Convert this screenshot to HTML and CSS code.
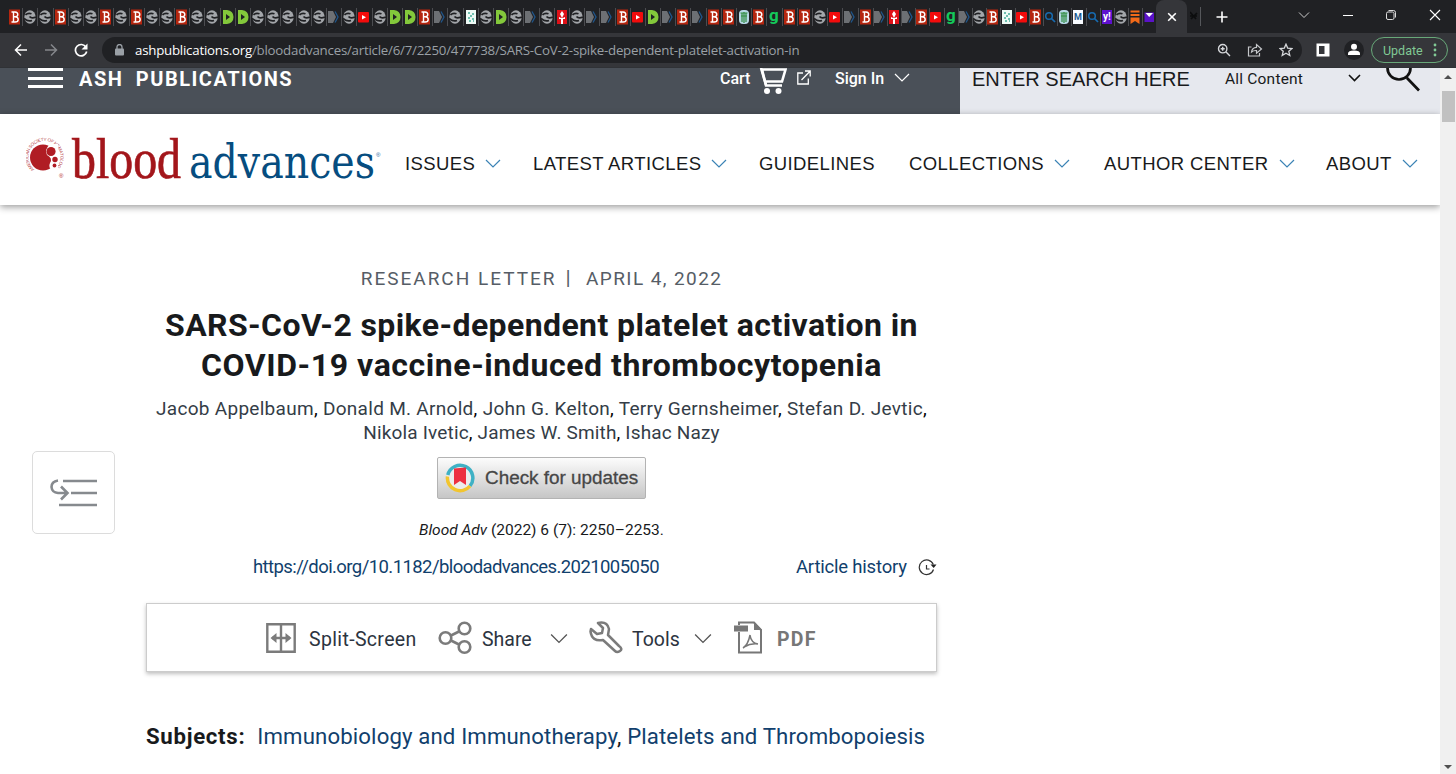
FILE: index.html
```html
<!DOCTYPE html>
<html lang="en">
<head>
    <meta charset="UTF-8">
    <meta name="viewport" content="width=device-width, initial-scale=1.0">
    <title>SARS-CoV-2 spike-dependent platelet activation in COVID-19 vaccine-induced thrombocytopenia</title>
    <link rel="stylesheet" href="styles.css">
</head>
<body>
    <!-- favicons and shared icons -->
    <svg class="defs" width="0" height="0">
        <symbol id="b" viewBox="0 0 12 16"><rect width="11" height="15" y=".5" fill="#b5260f"/><path d="M2.500 3H6q2.800.3 2.800 2.400T6 7.800q3.200.1 3.200 2.600T6 13H2.500M4.500 3v10M4.500 7.800H6" fill="none" stroke="#fff" stroke-width="1.400"/></symbol>
        <symbol id="e" viewBox="0 0 12 16"><ellipse cx="6" cy="8" rx="5.700" ry="6.800" fill="#a3a6aa"/><path d="M1.500 6Q4 3.300 7.500 4.800M12 8Q7.500 10 5.500 7.500M0 9.500q4 3.500 8 2" fill="none" stroke="#202124" stroke-width="1.700"/></symbol>
        <symbol id="d" viewBox="0 0 12 16"><path d="M1 1h4q6.500 1 6.500 7T5 15H1z" fill="#83c83b"/><path d="M4 5l4 3-4 3z" fill="#202124"/></symbol>
        <symbol id="a" viewBox="0 0 12 16"><path d="M0 2h5l3 6-3 6H0z" fill="#6d7074"/><path d="M7 2.500L10 8l-3 5.500" fill="none" stroke="#20568c" stroke-width="1.300"/></symbol>
        <symbol id="y" viewBox="0 0 12 16"><rect y="3" width="11" height="10.500" rx="1" fill="#f20c0c"/><path d="M4 6l4 2.300L4 10.500z" fill="#fff"/></symbol>
        <symbol id="p" viewBox="0 0 12 16"><rect x="1" y="1" width="10" height="14" fill="#eefaf5"/><path d="M3 4h2M7 5h2M5 7h2M3 9h2M7 10h2M4 12h2M8 12h1" stroke="#45ad99" stroke-width="1.600"/></symbol>
        <symbol id="r" viewBox="0 0 12 16"><rect x="1" y="1" width="10" height="14" fill="#df1118"/><path d="M6 2l2 3-2 4-2-4zM3 8q3 2 6 0v2H3zM5 10h2v5H5z" fill="#fff"/></symbol>
        <symbol id="t" viewBox="0 0 12 16"><rect x="1" y="1" width="10" height="14" rx="4" fill="#b7d8e5"/><path d="M2.500 4h7M3 7h6M4 4v9M8 4v9M6 3v11" stroke="#328c42" stroke-width="1.200"/></symbol>
        <symbol id="g" viewBox="0 0 12 16"><text x="1" y="12" class="fav-g">g</text></symbol>
        <symbol id="s" viewBox="0 0 12 16"><circle cx="5" cy="7" r="3.300" fill="none" stroke="#176bb0" stroke-width="1.500"/><path d="M7.500 9.500L11 13" stroke="#176bb0" stroke-width="1.700"/></symbol>
        <symbol id="m" viewBox="0 0 12 16"><rect x="1" y="1" width="10" height="14" fill="#f8fbff"/><text x="2" y="11" class="fav-m">M</text></symbol>
        <symbol id="h" viewBox="0 0 12 16"><rect x="1" y="1" width="10" height="14" fill="#5e11cf"/><text x="2" y="11" class="fav-y">y!</text></symbol>
        <symbol id="o" viewBox="0 0 12 16"><path d="M1.500 1.500h9v2h-9zM1.500 5h9v2h-9zM1.500 8.500h9V15L6 12l-4.500 3z" fill="#f26a19"/></symbol>
        <symbol id="l" viewBox="0 0 12 16"><path d="M1.500 3.500h9.500V13H1.500z" fill="#5a12c8"/><path d="M2.500 4h7.500L6.200 8z" fill="#fff"/></symbol>
        <symbol id="chevron" viewBox="0 0 16 10"><path d="M1 1l7 7 7-7" fill="none" stroke="currentColor" stroke-width="1.200"/></symbol>
    </svg>

    <div class="tab-strip">
        <div class="tabs" id="tabs"></div>
        <div class="active-tab"><svg width="10" height="10" viewBox="0 0 10 10"><path d="M1.200 1.200l7.600 7.600M8.800 1.200L1.200 8.800" stroke="#fff" stroke-width="1.600"/></svg></div>
        <div class="last-tab"><svg width="8" height="10" viewBox="0 0 8 10"><path d="M0 1l6 7M1 8l6-6M0 5h7" stroke="#0c0d0e" stroke-width="1.700"/></svg></div>
        <svg class="new-tab" width="12" height="12" viewBox="0 0 12 12"><path d="M6 .5v11M.5 6h11" stroke="#fff" stroke-width="1.600"/></svg>
        <div class="window-controls">
            <svg width="12" height="12" viewBox="0 0 12 12"><path d="M1 3.500l5 5 5-5" stroke="#ccc" fill="none"/></svg>
            <svg width="12" height="12" viewBox="0 0 12 12"><path d="M1 6.500h10" stroke="#fff"/></svg>
            <svg width="12" height="12" viewBox="0 0 12 12"><path d="M3.500 1.500h5q2 0 2 2v5" stroke="#ddd" fill="none"/><rect x="1.500" y="3" width="7.500" height="7.500" rx="1.500" stroke="#ddd" fill="none"/></svg>
            <svg width="12" height="12" viewBox="0 0 12 12"><path d="M1 1l10 10M11 1L1 11" stroke="#fff" stroke-width="1.100"/></svg>
        </div>
    </div>

    <div class="toolbar">
        <div class="history">
            <svg width="14" height="14" viewBox="0 0 14 14"><path d="M13 7H2M7 1.500L1.500 7 7 12.500" stroke="#fff" stroke-width="1.500" fill="none"/></svg>
            <svg width="14" height="14" viewBox="0 0 14 14"><path d="M1 7h11M7 1.500L12.500 7 7 12.500" stroke="#85878b" stroke-width="1.500" fill="none"/></svg>
            <svg width="14" height="14" viewBox="0 0 14 14"><path d="M12 4.200A5.700 5.700 0 1 0 12.700 8.500" stroke="#fff" stroke-width="1.700" fill="none"/><path d="M13.500.5v6h-6z" fill="#fff"/></svg>
        </div>
        <div class="omnibox">
            <svg class="lock" width="9" height="12" viewBox="0 0 9 12"><rect y="4.500" width="9" height="7" rx="1" fill="#9aa0a6"/><path d="M2 5V3a2.500 2.500 0 0 1 5 0v2" stroke="#9aa0a6" stroke-width="1.300" fill="none"/></svg>
            <span class="url"><b>ashpublications.org</b>/bloodadvances/article/6/7/2250/477738/SARS-CoV-2-spike-dependent-platelet-activation-in</span>
            <span class="page-actions">
                <svg width="14" height="14" viewBox="0 0 14 14" fill="none" stroke="#d5d7da" stroke-width="1.400"><circle cx="5.700" cy="5.700" r="4.200"/><path d="M8.800 8.800L13 13M3.700 5.700h4M5.700 3.700v4"/></svg>
                <svg width="16" height="14" viewBox="0 0 16 14" fill="none" stroke="#c5c7ca" stroke-width="1.200"><path d="M4.500 4H1.500v9h11v-3M4.500 9q.5-4.500 5-4.700V1.500L14.500 6l-5 4.200V7.500Q6.500 7.300 4.500 9z"/></svg>
                <svg width="14" height="14" viewBox="0 0 14 14" fill="none" stroke="#d5d7da" stroke-width="1.300"><path d="M7 1.200l1.700 3.900 4.300.4-3.200 2.800 1 4.200L7 10.300l-3.800 2.200 1-4.200L1 5.500l4.300-.4z"/></svg>
            </span>
        </div>
        <svg class="side-panel" width="14" height="14" viewBox="0 0 14 14"><path d="M.5.500h13v13H.500z M3 3v8h5.500V3z" fill="#fff" fill-rule="evenodd"/></svg>
        <svg class="profile" width="20" height="20" viewBox="0 0 20 20"><circle cx="10" cy="10" r="10" fill="#202124"/><circle cx="10" cy="6.700" r="3" fill="#fff"/><path d="M4 15v-1.500q0-3 6-3t6 3V15z" fill="#fff"/></svg>
        <div class="update">Update <svg width="4" height="14" viewBox="0 0 4 14" fill="#81c995"><circle cx="2" cy="2" r="1.400"/><circle cx="2" cy="7" r="1.400"/><circle cx="2" cy="12" r="1.400"/></svg></div>
    </div>

    <div class="viewport">
        <div class="page">
            <div class="ash-bar">
                <div class="burger"><i></i><i></i><i></i></div>
                <span class="ash-name">ASH PUBLICATIONS</span>
                <div class="account">
                    <span class="cart">Cart</span>
                    <svg class="cart-icon" width="28" height="27" viewBox="0 0 28 27"><path d="M3 1.500h23.500l-3.500 12H6zM6 13.500l1 4h16" fill="none" stroke="#fff" stroke-width="2.600"/><path d="M2 0l5 17" fill="none" stroke="#fff" stroke-width="2.600"/><circle cx="8" cy="23" r="3" fill="#fff"/><circle cx="19.500" cy="23" r="3" fill="#fff"/></svg>
                    <svg class="external" width="14" height="15" viewBox="0 0 14 15"><path d="M6 3H.8v11h10.500V8.500M4.500 10L13 1.200M8 1h5.200v5.500" fill="none" stroke="#fff" stroke-width="1.300"/></svg>
                    <span class="sign-in">Sign In</span>
                    <svg class="chevron"><use href="#chevron"/></svg>
                </div>
                <div class="search">
                    <span class="search-text">ENTER SEARCH HERE</span>
                    <span class="search-scope">All Content</span>
                    <svg class="scope-arrow" width="13" height="8" viewBox="0 0 13 8"><path d="M1 1l5.500 5.500L12 1" fill="none" stroke="#111" stroke-width="1.600"/></svg>
                    <svg class="magnifier" width="36" height="24" viewBox="0 0 36 24"><path d="M2.500 0a11.500 11.500 0 0 0 23 0M22 10l12 12.500" fill="none" stroke="#111" stroke-width="2.700"/></svg>
                </div>
            </div>

            <div class="journal-nav">
                <svg class="logo" width="366" height="74" viewBox="0 -12 366 74">
                    <defs><path id="ring" d="M8.500 34.500A16 16 0 1 1 30.500 32.500"/></defs>
                    <text class="ring-text"><textPath href="#ring" textLength="78">AMERICAN SOCIETY OF HEMATOLOGY</textPath></text>
                    <circle cx="17" cy="22.500" r="13" fill="#b01c24"/>
                    <path d="M24 9q-6 6-3 11 6 3 3 8-2 4 2 8l6-3V9z" fill="#fff"/>
                    <circle cx="25" cy="16.500" r="4.600" fill="#b01c24"/><circle cx="29" cy="24.500" r="2.700" fill="#b01c24"/><circle cx="28.500" cy="30.500" r="1.900" fill="#b01c24"/>
                    <text class="mark" x="33" y="43">®</text>
                    <text class="blood" x="46" y="43" textLength="109" lengthAdjust="spacingAndGlyphs">blood</text>
                    <text class="advances" x="163" y="43" textLength="186" lengthAdjust="spacingAndGlyphs">advances</text>
                    <text class="mark mark-blue" x="350" y="22">®</text>
                </svg>
                <ul class="menu">
                    <li>ISSUES <svg class="chevron"><use href="#chevron"/></svg></li>
                    <li>LATEST ARTICLES <svg class="chevron"><use href="#chevron"/></svg></li>
                    <li>GUIDELINES</li>
                    <li>COLLECTIONS <svg class="chevron"><use href="#chevron"/></svg></li>
                    <li>AUTHOR CENTER <svg class="chevron"><use href="#chevron"/></svg></li>
                    <li>ABOUT <svg class="chevron"><use href="#chevron"/></svg></li>
                </ul>
            </div>

            <div class="content">
                <div class="outline-button">
                    <svg width="48" height="32" viewBox="0 0 48 32" fill="none" stroke="#868a8e"><path d="M13 4h34M21 16h26M9 28h38M8 3.500Q1.500 4.500 1.500 10 2 15.500 8 16h9M11 9.500l6.500 6.500-6.500 6.500" stroke-width="2.600"/></svg>
                </div>
                <div class="article">
                    <div class="kicker"><span class="kind">RESEARCH LETTER</span><span class="bar">|</span><span>APRIL 4, 2022</span></div>
                    <h1>SARS-CoV-2 spike-dependent platelet activation in<br><span class="second-line">COVID-19 vaccine-induced thrombocytopenia</span></h1>
                    <p class="authors">Jacob Appelbaum<i>,</i> Donald M. Arnold<i>,</i> John G. Kelton<i>,</i> Terry Gernsheimer<i>,</i> Stefan D. Jevtic<i>,</i><br><span class="second-line">Nikola Ivetic<i>,</i> James W. Smith<i>,</i> Ishac Nazy</span></p>
                    <div class="crossmark">
                        <svg width="30" height="30" viewBox="0 0 30 30"><circle cx="15" cy="15" r="12.500" fill="#ececec"/><path d="M2.800 12A12.700 12.700 0 1 1 25 23" fill="none" stroke="#3fb1c5" stroke-width="3.500"/><path d="M2.500 13.500A12.700 12.700 0 0 0 25 23" fill="none" stroke="#f2c52f" stroke-width="3.500"/><path d="M9 5.500l12-1V22l-6-4-6 4z" fill="#ed2f40"/></svg>
                        <span>Check for updates</span>
                    </div>
                    <p class="citation"><em>Blood Adv</em> (2022) 6 (7): 2250–2253.</p>
                    <div class="doi-row">
                        <a class="doi">https://doi.org/10.1182/bloodadvances.2021005050</a>
                        <a class="article-history">Article history</a>
                        <svg width="19" height="17" viewBox="0 0 19 17"><path d="M15.500 10.500A7.300 7.300 0 1 1 15.300 5.500M8.500 6v4h3" fill="none" stroke="#333" stroke-width="1.200"/><path d="M12.500 5.500h6L15.700 9z" fill="#222"/></svg>
                    </div>
                    <div class="tools">
                        <svg class="tool-icon" width="30" height="30" viewBox="0 0 30 30"><path d="M1.300 1.300h27.400v27.400H1.300zM15 1v28M6 15h18" fill="none" stroke="#7b7b7b" stroke-width="2.400"/><path d="M4.500 15l6-5v10zM25.500 15l-6-5v10z" fill="#7b7b7b"/></svg>
                        <span class="split">Split-Screen</span>
                        <svg class="tool-icon share-icon" width="34" height="34" viewBox="0 0 34 34" fill="none" stroke="#7b7b7b" stroke-width="2.600"><circle cx="7.500" cy="17" r="5.800"/><circle cx="26.500" cy="7.500" r="5.800"/><circle cx="26.500" cy="26" r="5.800"/><path d="M13 14.500l8-4M13 19.500l8 4"/></svg>
                        <span class="share">Share</span>
                        <svg class="chevron"><use href="#chevron"/></svg>
                        <svg class="tool-icon wrench" width="34" height="34" viewBox="0 0 34 34"><path d="M9 2Q18 0 20 8l-1 6 11 11q4 3 1 5t-5 0L14 19Q3 21 1.500 10.500L2 8l6 5 5-1 1-5z" fill="none" stroke="#7b7b7b" stroke-width="2.500" stroke-linejoin="round"/></svg>
                        <span class="tool-label">Tools</span>
                        <svg class="chevron"><use href="#chevron"/></svg>
                        <svg class="tool-icon pdf-icon" width="29" height="33" viewBox="0 0 29 33"><path d="M5 11v20.500h22V9l-7-7.500H5V4" fill="none" stroke="#777" stroke-width="2"/><path d="M0 4.500h14v6H0zM20 1v8h8z" fill="#777"/><path d="M9 27q5-3 7-13 1 8 8 9-7-1-14 3" fill="none" stroke="#777" stroke-width="1.500"/></svg>
                        <span class="pdf">PDF</span>
                    </div>
                    <p class="subjects"><b>Subjects:</b><a>Immunobiology and Immunotherapy</a>, <a>Platelets and Thrombopoiesis</a></p>
                </div>
            </div>
        </div>
        <div class="scrollbar"><i class="up"></i><i class="thumb"></i><i class="down"></i></div>
    </div>

    <script>
        const tabs = document.getElementById('tabs');
        // one letter per open tab, each is the id of a favicon
        const wide = 'beebeebebeebeeddeeeeeaeyeddbaepedeaereaabydababbtbgbbeyab';
        const narrow = 'arabygaebpybstmsheol';

        function addTabs(list, className) {
            for (const id of list) {
                const tab = document.createElement('div');
                tab.className = 'tab ' + className;
                tab.innerHTML = `<svg width="12" height="16"><use href="#${id}"/></svg>`;
                tabs.appendChild(tab);
            }
        }

        addTabs(wide, 'wide');
        addTabs(narrow, 'narrow');
    </script>
</body>
</html>
```

FILE: styles.css
```css
* {
    box-sizing: border-box;
}

body {
    margin: 0;
    width: 1456px;
    height: 774px;
    overflow: hidden;
    background-color: #fff;
    color: #181a1c;
    font-family: 'Roboto', 'Liberation Sans', sans-serif;
}

svg {
    display: block;
    flex-shrink: 0;
}

.defs {
    display: none;
}

p, h1, ul {
    margin: 0;
    padding: 0;
}

.tab-strip {
    height: 33px;
    display: flex;
    align-items: center;
    background-color: #202124;
}

.tabs {
    display: flex;
    width: 1156px;
    padding-left: 8px;
    overflow: hidden;
}

.tab {
    height: 18px;
    padding-left: 1px;
    border-right: 1px solid #4b4c50;
    display: flex;
    align-items: center;
    flex-shrink: 0;
}

.wide {
    width: 15.2px;
}

.narrow {
    width: 14.2px;
    padding-left: 0;
}

.tab:last-child {
    border-right: none;
}

.fav-g {
    font: bold 17px 'Roboto', sans-serif;
    fill: #14c95b;
}

.fav-m {
    font: bold 9px 'Roboto', sans-serif;
    fill: #17578f;
}

.fav-y {
    font: bold 10px 'Roboto', sans-serif;
    fill: #fff;
}

.active-tab {
    width: 31px;
    height: 33px;
    background-color: #35363a;
    border-radius: 8px 8px 0 0;
    display: flex;
    align-items: center;
    justify-content: center;
}

.last-tab {
    width: 14px;
    height: 19px;
    padding: 4px 0 0 3px;
    border-right: 1px solid #55575b;
}

.new-tab {
    margin-left: 15px;
}

.window-controls {
    display: flex;
    gap: 31.5px;
    margin-left: 70px;
    margin-bottom: 4px;
}

.toolbar {
    height: 35px;
    display: flex;
    align-items: center;
    background-color: #35363a;
    border-bottom: 1px solid #303236;
}

.history {
    display: flex;
    gap: 16px;
    width: 102px;
    padding-left: 14px;
}

.omnibox {
    width: 1200px;
    height: 26px;
    border-radius: 13px;
    background-color: #202124;
    display: flex;
    align-items: center;
    padding: 0 9px 0 13px;
}

.url {
    margin-left: 11px;
    font-family: 'Open Sans', 'Noto Sans', sans-serif;
    font-size: 13.3px;
    letter-spacing: -0.24px;
    color: #9aa0a6;
    white-space: nowrap;
}

.url b {
    color: #fff;
    font-weight: normal;
}

.page-actions {
    display: flex;
    gap: 16px;
    margin-left: auto;
}

.side-panel {
    margin-left: 14px;
}

.profile {
    margin-left: 14px;
}

.update {
    width: 77px;
    height: 26px;
    margin-left: 7px;
    border: 1.5px solid #68a879;
    border-radius: 13px;
    color: #81c995;
    font-size: 12.5px;
    display: flex;
    align-items: center;
    justify-content: space-between;
    padding: 0 10px 0 11px;
}

.viewport {
    display: flex;
    height: 706px;
}

.page {
    width: 1440px;
    overflow: hidden;
}

.ash-bar {
    height: 46px;
    display: flex;
    background-color: #4a5058;
    color: #fff;
}

.burger {
    width: 35px;
    height: 20px;
    margin-left: 28px;
    display: flex;
    flex-direction: column;
    justify-content: space-between;
}

.burger i {
    height: 3px;
    background-color: #fff;
}

.ash-name {
    width: 640px;
    margin-left: 16px;
    line-height: 23px;
    font-size: 20px;
    font-weight: bold;
    letter-spacing: 1.5px;
    word-spacing: 6px;
}

.account {
    width: 241px;
    display: flex;
    font-size: 16px;
    font-weight: 500;
    line-height: 21px;
}

.cart {
    width: 40px;
    padding-left: 1px;
}

.external {
    margin: 2px 24px 0 10px;
}

.sign-in {
    width: 59px;
}

.chevron {
    width: 16px;
    height: 10px;
}

.account .chevron {
    margin-top: 5px;
}

.search {
    width: 480px;
    display: flex;
    padding-left: 12px;
    background-color: #e6e8ee;
    color: #181a1c;
    line-height: 23px;
}

.search-text {
    width: 253px;
    font-family: 'Liberation Sans', sans-serif;
    font-size: 20px;
    white-space: nowrap;
}

.search-scope {
    width: 123px;
    font-size: 15.5px;
    letter-spacing: 0.2px;
}

.scope-arrow {
    margin-top: 6px;
}

.magnifier {
    margin-left: 24px;
}

.journal-nav {
    position: relative;
    height: 91px;
    display: flex;
    align-items: center;
    background-color: #fff;
    box-shadow: 0 2px 7px rgba(0, 0, 0, 0.4);
}

.logo {
    margin: 1px 0 0 26px;
}

.ring-text {
    font: 4.500px 'Liberation Sans', sans-serif;
    fill: #b7434a;
}

.mark {
    font: 6px 'Liberation Sans', sans-serif;
    fill: #b01c24;
}

.mark-blue {
    fill: #12629c;
}

.blood {
    font: 56px 'Liberation Serif', serif;
    fill: #a3161b;
    stroke: #a3161b;
    stroke-width: 0.7px;
}

.advances {
    font: 47px 'DejaVu Serif', serif;
    fill: #064d80;
}

.menu {
    display: grid;
    grid-template-columns: 128px 226px 150px 195px 222px 110px;
    margin-left: 13px;
    list-style: none;
    font-family: 'Liberation Sans', sans-serif;
    font-size: 18.5px;
    letter-spacing: 0.4px;
    white-space: nowrap;
    padding-top: 8px;
}

.menu li {
    display: flex;
    align-items: center;
}

.menu .chevron {
    margin-left: 10px;
    color: #3b83b5;
}

.content {
    display: flex;
    align-items: flex-start;
}

.outline-button {
    width: 83px;
    height: 83px;
    margin: 246px 31px 0 32px;
    border: 1px solid #dcdcdc;
    border-radius: 5px;
    display: flex;
    align-items: center;
    justify-content: center;
}

.article {
    width: 791px;
    text-align: center;
}

.kicker {
    height: 30px;
    margin-top: 58px;
    display: flex;
    align-items: center;
    justify-content: center;
    color: #565d66;
    font-size: 19px;
    letter-spacing: 1.4px;
}

.kind {
    letter-spacing: 2px;
}

.bar {
    margin: 0 14px 0 9px;
    font-size: 21px;
}

h1 {
    margin-top: 12px;
    font-size: 32px;
    line-height: 40px;
    letter-spacing: 0.4px;
    white-space: nowrap;
}

h1 .second-line {
    letter-spacing: 0.56px;
}

.authors {
    margin-top: 12px;
    color: #343d47;
    font-size: 19px;
    line-height: 24px;
    letter-spacing: 0.29px;
    white-space: nowrap;
}

.authors .second-line {
    letter-spacing: 0.16px;
}

.authors i {
    font-style: normal;
    color: #000;
}

.crossmark {
    width: 209px;
    height: 42px;
    margin: 12px auto 0;
    display: flex;
    align-items: center;
    padding-left: 7px;
    border: 1px solid #b3b3b3;
    border-radius: 2px;
    background: linear-gradient(#fcfcfc, #c6c6c6);
    color: #464646;
    font-family: 'Liberation Sans', sans-serif;
    font-size: 18.9px;
    -webkit-text-stroke: 0.3px #464646;
    white-space: nowrap;
}

.crossmark span {
    margin-left: 10px;
}

.citation {
    margin-top: 21px;
    font-size: 15.5px;
    line-height: 20px;
}

.doi-row {
    display: flex;
    align-items: center;
    margin-top: 15px;
    height: 24px;
    padding-left: 107px;
    color: #113f6d;
    font-size: 18.5px;
    text-align: left;
}

.doi {
    width: 543px;
    letter-spacing: -0.58px;
}

.article-history {
    width: 122px;
    letter-spacing: -0.2px;
}

.tools {
    height: 69px;
    margin-top: 24px;
    display: flex;
    align-items: center;
    padding-left: 119px;
    border: 1px solid #ccc;
    box-shadow: 0 2px 4px rgba(0, 0, 0, 0.25);
    color: #2c3440;
    font-size: 19.5px;
    text-align: left;
}

.tools span {
    padding-top: 4px;
}

.split {
    width: 142px;
    padding-left: 13px;
    letter-spacing: 0.35px;
}

.share {
    width: 78px;
    padding-left: 10px;
}

.tools .chevron {
    width: 18px;
    height: 12px;
    margin-top: 2px;
    color: #555;
}

.wrench {
    margin-left: 21px;
}

.tool-label {
    width: 71px;
    padding-left: 9px;
}

.pdf-icon {
    margin-left: 22px;
}

.pdf {
    padding-left: 14px;
    color: #777;
    font-weight: bold;
    letter-spacing: 1.3px;
}

.subjects {
    margin-top: 50px;
    font-size: 22.2px;
    line-height: 28px;
    letter-spacing: 0.13px;
    text-align: left;
    white-space: nowrap;
}

.subjects b {
    margin-right: 12px;
    letter-spacing: 0.7px;
}

.subjects a {
    color: #113f6d;
}

.scrollbar {
    width: 16px;
    background-color: #f0f0f0;
    display: flex;
    flex-direction: column;
    align-items: center;
}

.up {
    margin-top: 7px;
    border: 4px solid transparent;
    border-top: none;
    border-bottom: 4px solid #505050;
}

.thumb {
    width: 13px;
    height: 31px;
    margin-top: 12px;
    background-color: #c1c1c1;
}

.down {
    margin-top: auto;
    margin-bottom: 5px;
    border: 4px solid transparent;
    border-bottom: none;
    border-top: 4px solid #505050;
}
```
